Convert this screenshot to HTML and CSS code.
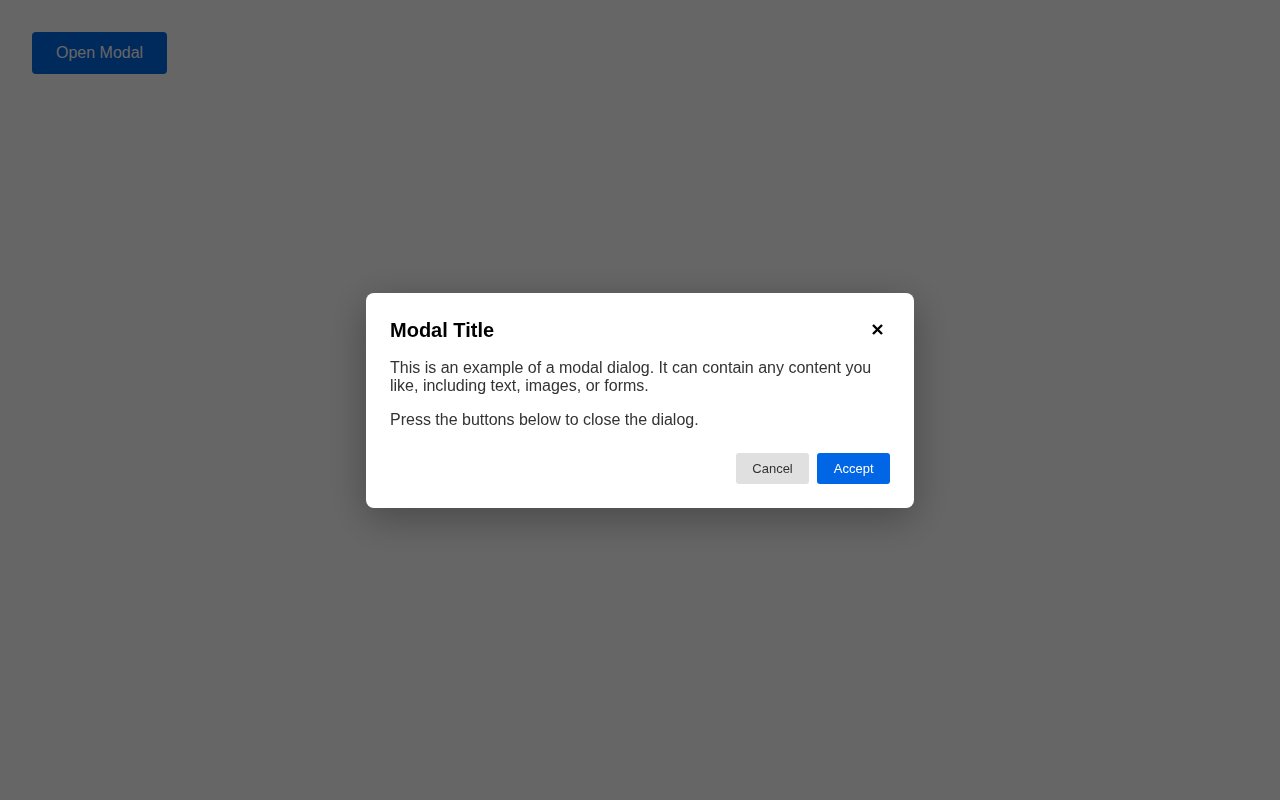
FILE: index.html
```html
<!DOCTYPE html>
<html lang="en">
<head>
<meta charset="utf-8">
<title>Modal</title>
<link rel="stylesheet" href="styles.css">
</head>
<body>
<div class="page">
  <button class="open-btn">Open Modal</button>
</div>
<div class="overlay">
  <div class="modal" role="dialog" aria-labelledby="mtitle">
    <div class="modal-header">
      <h2 class="modal-title" id="mtitle">Modal Title</h2>
      <button class="close-btn" aria-label="Close">
        <svg width="11" height="11" viewBox="0 0 11 11"><path d="M1 1L10 10M10 1L1 10" stroke="#000" stroke-width="2.4" fill="none"/></svg>
      </button>
    </div>
    <p class="modal-text first">This is an example of a modal dialog. It can contain any content you like, including text, images, or forms.</p>
    <p class="modal-text">Press the buttons below to close the dialog.</p>
    <div class="modal-footer">
      <button class="btn btn-cancel">Cancel</button>
      <button class="btn btn-accept">Accept</button>
    </div>
  </div>
</div>
</body>
</html>
```
FILE: styles.css
```css
html, body {
  margin: 0;
  padding: 0;
  background: #ffffff;
  font-family: "Liberation Sans", Arial, sans-serif;
}
.page {
  padding: 32px;
}
.open-btn {
  font-family: "Liberation Sans", Arial, sans-serif;
  font-size: 16px;
  background: #0066e6;
  color: #ffffff;
  border: none;
  border-radius: 4px;
  padding: 12px 24px;
  line-height: 18px;
}
.overlay {
  position: fixed;
  inset: 0;
  background: rgba(0, 0, 0, 0.6);
  display: flex;
  align-items: center;
  justify-content: center;
}
.modal {
  background: #ffffff;
  width: 500px;
  padding: 24px;
  border-radius: 8px;
  box-shadow: 0 10px 40px rgba(0, 0, 0, 0.3);
}
.modal-header {
  display: flex;
  align-items: center;
  justify-content: space-between;
  margin-bottom: 16px;
}
.modal-title {
  margin: 0;
  font-size: 20px;
  line-height: 24px;
  font-weight: bold;
  color: #000;
}
.close-btn {
  width: 26px;
  height: 26px;
  padding: 0;
  border: none;
  background: transparent;
  display: flex;
  align-items: center;
  justify-content: center;
}
.modal-text {
  margin: 0;
  font-size: 16px;
  line-height: 18px;
  color: #333333;
}
.modal-text.first {
  margin-bottom: 16px;
}
.modal-footer {
  display: flex;
  justify-content: flex-end;
  gap: 8px;
  margin-top: 24px;
}
.btn {
  font-family: "Liberation Sans", Arial, sans-serif;
  font-size: 13px;
  line-height: 15px;
  padding: 8px 16.5px;
  border: none;
  border-radius: 3px;
}
.btn-cancel {
  background: #e0e0e0;
  color: #333333;
}
.btn-accept {
  background: #0066e6;
  color: #ffffff;
}
```
